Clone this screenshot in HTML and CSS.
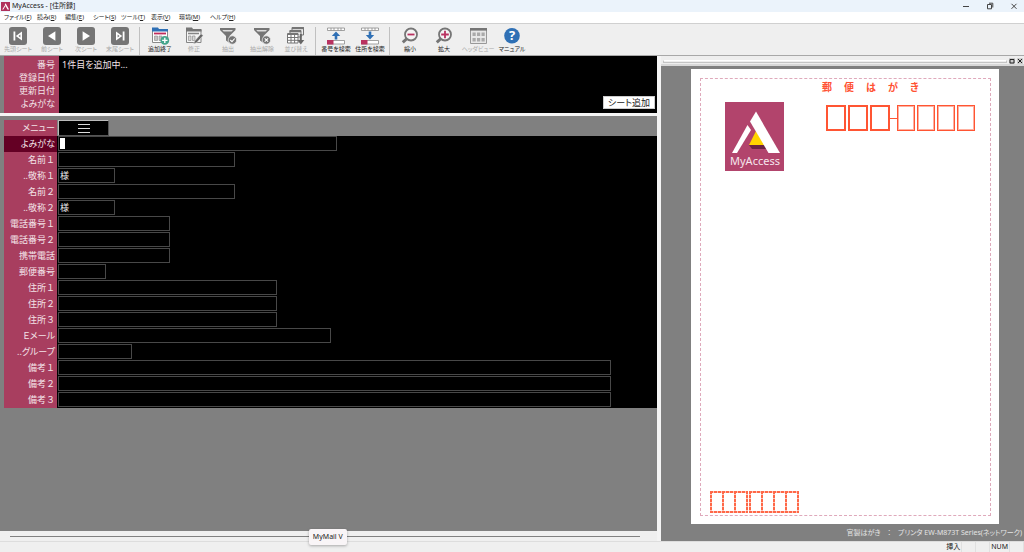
FILE: index.html
```html
<!DOCTYPE html>
<html lang="ja">
<head>
  <meta charset="UTF-8">
  <title>MyAccess - [住所録]</title>
  <link rel="stylesheet" href="styles.css">
</head>
<body>
  <header class="titlebar">
    <svg class="app-icon" viewBox="0 0 10 10"><rect width="10" height="10" fill="#b0305c"/><path d="M1.3 8.2L4.4 3.6L5 4.4L2.6 8.2ZM4.2 2.8L5.1 1.3L9 8.2H7.2Z" fill="#fff"/></svg>
    <h1 class="title">MyAccess - [住所録]</h1>
    <div class="window-buttons">
      <button aria-label="最小化"><svg viewBox="0 0 8 8"><path d="M1 4.5H7" stroke="#444" fill="none"/></svg></button>
      <button aria-label="元に戻す"><svg viewBox="0 0 8 8"><path d="M1.5 2.5H5.5V6.8H1.5ZM3 1.2H6.8V5.5" stroke="#444" fill="none"/></svg></button>
      <button aria-label="閉じる"><svg viewBox="0 0 8 8"><path d="M1.5 1.8L6.5 6.8M6.5 1.8L1.5 6.8" stroke="#444" fill="none"/></svg></button>
    </div>
  </header>

  <nav class="menubar">
    <button>ファイル(<u>F</u>)</button>
    <button>読み(<u>R</u>)</button>
    <button>編集(<u>E</u>)</button>
    <button>シート(<u>S</u>)</button>
    <button>ツール(<u>T</u>)</button>
    <button>表示(<u>V</u>)</button>
    <button>環境(<u>M</u>)</button>
    <button>ヘルプ(<u>H</u>)</button>
  </nav>

  <div class="toolbar">
    <button class="tool" disabled>
      <svg viewBox="0 0 20 18"><rect x="1" width="18" height="18" rx="3" fill="#757575"/><path d="M5.5 4.5H7.3V13.5H5.5ZM14 4.5V13.5L7.8 9Z" fill="#fff"/><path d="M12.4 7.5V10.5L10.5 9Z" fill="#757575"/></svg>
      <span>先頭シート</span>
    </button>
    <button class="tool" disabled>
      <svg viewBox="0 0 20 18"><rect x="1" width="18" height="18" rx="3" fill="#757575"/><path d="M13.4 4.3V13.7L6 9Z" fill="#fff"/></svg>
      <span>前シート</span>
    </button>
    <button class="tool" disabled>
      <svg viewBox="0 0 20 18"><rect x="1" width="18" height="18" rx="3" fill="#757575"/><path d="M6.6 4.3V13.7L14 9Z" fill="#fff"/></svg>
      <span>次シート</span>
    </button>
    <button class="tool" disabled>
      <svg viewBox="0 0 20 18"><rect x="1" width="18" height="18" rx="3" fill="#757575"/><path d="M12.7 4.5H14.5V13.5H12.7ZM6 4.5V13.5L12.2 9Z" fill="#fff"/><path d="M7.6 7.5V10.5L9.5 9Z" fill="#757575"/></svg>
      <span>末尾シート</span>
    </button>
    <i class="separator"></i>
    <button class="tool">
      <svg viewBox="0 0 20 18"><path d="M2.5 3V15.5H17.5V3Z" fill="#fff" stroke="#8a8a8a"/><path d="M2 .5H8L9 2H18V4.5H2Z" fill="#2f70b5"/><path d="M4 6.5H16" stroke="#c02d5c" stroke-width="1.8"/><path d="M4.5 9H7.5V13.5H4.5ZM9 9H12V13.5H9Z" fill="#c4c4c4" stroke="#8a8a8a" stroke-width=".6"/><circle cx="14.8" cy="13.4" r="4.4" fill="#45a58c"/><path d="M14.8 10.7V16.1M12.1 13.4H17.5" stroke="#fff" stroke-width="1.4"/></svg>
      <span>追加終了</span>
    </button>
    <button class="tool" disabled>
      <svg viewBox="0 0 20 18"><path d="M2.5 3V15.5H17V3Z" fill="#f4f4f4" stroke="#858585"/><path d="M2 .5H8L9 2H17.5V4.5H2Z" fill="#757575"/><path d="M4 6.5H15" stroke="#858585" stroke-width="1.5"/><path d="M4.5 9H7V13.5H4.5ZM8.5 9H11V13.5H8.5Z" fill="#d8d8d8" stroke="#858585" stroke-width=".6"/><path d="M9.5 17L10.6 14L17 6.8L19.2 8.5L12.6 15.8Z" fill="#666" stroke="#efefef" stroke-width=".5"/></svg>
      <span>修正</span>
    </button>
    <button class="tool" disabled>
      <svg viewBox="0 0 20 18"><path d="M2 1H17.5V3L11.5 9V16L8 13.5V9L2 3Z" fill="#757575"/><path d="M4.2 3H15L13.6 4.5H5.7Z" fill="#ddd"/><circle cx="14.4" cy="13" r="4.2" fill="#757575" stroke="#efefef" stroke-width=".7"/><path d="M12.3 13L14 14.7L16.7 11.5" fill="none" stroke="#fff" stroke-width="1.1"/></svg>
      <span>抽出</span>
    </button>
    <button class="tool" disabled>
      <svg viewBox="0 0 20 18"><path d="M2 1H17.5V3L11.5 9V16L8 13.5V9L2 3Z" fill="#757575"/><path d="M4.2 3H15L13.6 4.5H5.7Z" fill="#ddd"/><circle cx="14.4" cy="13" r="4.2" fill="#757575" stroke="#efefef" stroke-width=".7"/><path d="M12.7 11.3L16.1 14.7M16.1 11.3L12.7 14.7" fill="none" stroke="#fff" stroke-width="1.1"/></svg>
      <span>抽出解除</span>
    </button>
    <button class="tool" disabled>
      <svg viewBox="0 0 20 18"><path d="M6 .5H17.5V8H6Z" fill="#eee" stroke="#757575"/><path d="M6 1.2H18" stroke="#757575" stroke-width="2"/><path d="M4 3.5H15V10H4Z" fill="#eee" stroke="#757575"/><path d="M3.5 4.3H15" stroke="#757575" stroke-width="2"/><path d="M1.5 6.5H12V16H1.5Z" fill="#fff" stroke="#757575"/><path d="M1 7.5H12.5M1.5 10.5H12M1.5 13.3H12M5 8V16M8.6 8V16" stroke="#757575"/><path d="M14.8 7V15" stroke="#666" stroke-width="2"/><path d="M11.3 13H18.3L14.8 17.5Z" fill="#666"/></svg>
      <span>並び替え</span>
    </button>
    <i class="separator"></i>
    <button class="tool">
      <svg viewBox="0 0 20 18"><path d="M1.5 1H18.5V3.5H1.5ZM5 1V3.5M8 1V3.5M12 1V3.5M15 1V3.5" fill="#fff" stroke="#8b8b8b" stroke-width=".8"/><path d="M1.5 13.5H18.5V17H1.5Z" fill="#fff" stroke="#8b8b8b" stroke-width=".8"/><path d="M1 13H7.5V17.5H1Z" fill="#b93260"/><path d="M10 4.5L14.2 9H11.3V12.5H8.7V9H5.8Z" fill="#2f70b5"/></svg>
      <span>番号を検索</span>
    </button>
    <button class="tool">
      <svg viewBox="0 0 20 18"><path d="M1.5 1H18.5V3.5H1.5ZM5 1V3.5M8 1V3.5M12 1V3.5M15 1V3.5" fill="#fff" stroke="#8b8b8b" stroke-width=".8"/><path d="M1.5 13.5H18.5V17H1.5Z" fill="#fff" stroke="#8b8b8b" stroke-width=".8"/><path d="M1 13H7.5V17.5H1Z" fill="#b93260"/><path d="M10 12.5L14.2 8H11.3V4.5H8.7V8H5.8Z" fill="#2f70b5"/></svg>
      <span>住所を検索</span>
    </button>
    <i class="separator"></i>
    <button class="tool">
      <svg viewBox="0 0 20 18"><path d="M7 11.5L2.8 15.3" stroke="#757575" stroke-width="3"/><circle cx="11" cy="7.5" r="6" fill="#f4f4f4" stroke="#757575" stroke-width="1.8"/><path d="M7.5 7.5H14.5" stroke="#b93260" stroke-width="1.8"/></svg>
      <span>縮小</span>
    </button>
    <button class="tool">
      <svg viewBox="0 0 20 18"><path d="M7 11.5L2.8 15.3" stroke="#757575" stroke-width="3"/><circle cx="11" cy="7.5" r="6" fill="#f4f4f4" stroke="#757575" stroke-width="1.8"/><path d="M7.2 7.5H14.8M11 3.7V11.3" stroke="#b93260" stroke-width="1.8"/></svg>
      <span>拡大</span>
    </button>
    <button class="tool" disabled>
      <svg viewBox="0 0 20 18"><path d="M2.5 1.5H18.5V16.5H2.5Z" fill="#e8e8e8" stroke="#999"/><path d="M2 2.3H19" stroke="#757575" stroke-width="2.6"/><path d="M4.5 5.5H7.7V9H4.5ZM9 5.5H12.2V9H9ZM13.5 5.5H16.7V9H13.5ZM4.5 11H7.7V14.5H4.5ZM9 11H12.2V14.5H9ZM13.5 11H16.7V14.5H13.5Z" fill="#aaa"/></svg>
      <span>ヘッダビュー</span>
    </button>
    <button class="tool">
      <svg viewBox="0 0 20 18"><circle cx="10" cy="8.7" r="7.8" fill="#2f70b5"/><text x="10" y="13.2" text-anchor="middle" class="help-mark">?</text></svg>
      <span>マニュアル</span>
    </button>
  </div>

  <main class="workspace">
    <div class="left-pane">
      <section class="summary">
        <dl class="summary-list">
          <dt>番号</dt><dd>1件目を追加中...</dd>
          <dt>登録日付</dt><dd></dd>
          <dt>更新日付</dt><dd></dd>
          <dt>よみがな</dt><dd></dd>
        </dl>
        <button class="add-sheet">シート追加</button>
      </section>

      <section class="sheet">
        <div class="row menu-row">
          <label for="menu">メニュー</label>
          <button id="menu" class="menu-button" aria-label="メニュー"><svg viewBox="0 0 12 10"><path d="M0 1.5H12M0 5.5H12M0 9.5H12" stroke="#ddd"/></svg></button>
        </div>
        <div class="row active">
          <label for="yomi">よみがな</label>
          <div class="field kana"><span class="cursor"></span><input id="yomi" type="text"></div>
        </div>
        <div class="row numbered"><label for="name1">名前１</label><div class="field name"><input id="name1" type="text"></div></div>
        <div class="row numbered"><label for="title1">..敬称１</label><div class="field honorific"><input id="title1" type="text" value="様"></div></div>
        <div class="row numbered"><label for="name2">名前２</label><div class="field name"><input id="name2" type="text"></div></div>
        <div class="row numbered"><label for="title2">..敬称２</label><div class="field honorific"><input id="title2" type="text" value="様"></div></div>
        <div class="row numbered"><label for="tel1">電話番号１</label><div class="field tel"><input id="tel1" type="text"></div></div>
        <div class="row numbered"><label for="tel2">電話番号２</label><div class="field tel"><input id="tel2" type="text"></div></div>
        <div class="row"><label for="mobile">携帯電話</label><div class="field tel"><input id="mobile" type="text"></div></div>
        <div class="row"><label for="zip">郵便番号</label><div class="field zip"><input id="zip" type="text"></div></div>
        <div class="row numbered"><label for="addr1">住所１</label><div class="field address"><input id="addr1" type="text"></div></div>
        <div class="row numbered"><label for="addr2">住所２</label><div class="field address"><input id="addr2" type="text"></div></div>
        <div class="row numbered"><label for="addr3">住所３</label><div class="field address"><input id="addr3" type="text"></div></div>
        <div class="row"><label for="email">Ｅメール</label><div class="field email"><input id="email" type="text"></div></div>
        <div class="row"><label for="group">..グループ</label><div class="field group"><input id="group" type="text"></div></div>
        <div class="row numbered"><label for="note1">備考１</label><div class="field note"><input id="note1" type="text"></div></div>
        <div class="row numbered"><label for="note2">備考２</label><div class="field note"><input id="note2" type="text"></div></div>
        <div class="row numbered"><label for="note3">備考３</label><div class="field note"><input id="note3" type="text"></div></div>
      </section>

      <div class="scroll-strip">
        <div class="scroll-line"></div>
        <div class="tooltip">MyMail V</div>
      </div>
    </div>

    <aside class="right-pane">
      <div class="dock-bar">
        <div class="grip"></div>
        <button aria-label="切り離す"><svg viewBox="0 0 6 6"><path d="M1 1.5H5V5H1Z" fill="none" stroke="#222"/></svg></button>
        <button aria-label="閉じる"><svg viewBox="0 0 6 6"><path d="M1 1L5 5M5 1L1 5" fill="none" stroke="#222"/></svg></button>
      </div>
      <div class="preview">
        <div class="postcard">
          <div class="print-area">
            <div class="card-top">
              <svg class="logo" viewBox="0 0 59 69">
                <rect width="59" height="69" fill="#b2446c"/>
                <path d="M24 43H40L43 47H27Z" fill="#6b2442"/>
                <path d="M31 29L40 43H24Z" fill="#ffd400"/>
                <path d="M7 51L22.500 23L26 28L12 51Z" fill="#fff"/>
                <path d="M25 19.500L31 9.500L55 51H43.500Z" fill="#fff"/>
                <text x="30" y="63" text-anchor="middle" class="logo-text">MyAccess</text>
              </svg>
              <div class="card-head">
                <div class="card-title"><span>郵</span><span>便</span><span>は</span><span>が</span><span>き</span></div>
                <div class="zip-boxes">
                  <i class="thick"></i><i class="thick"></i><i class="thick"></i>
                  <b></b>
                  <i></i><i></i><i></i><i></i>
                </div>
              </div>
            </div>
            <div class="sender-zip">
              <div class="cells"><i></i><i></i><i></i></div>
              <div class="cells"><i></i><i></i><i></i><i></i></div>
            </div>
          </div>
        </div>
        <p class="printer">官製はがき　：　プリンタ EW-M873T Series(ネットワーク)</p>
      </div>
    </aside>
  </main>

  <footer class="statusbar">
    <span class="cell">挿入</span>
    <span class="cell blank"></span>
    <span class="cell blank"></span>
    <span class="cell">NUM</span>
    <span class="cell blank"></span>
  </footer>
</body>
</html>
```
FILE: styles.css
```css
* {
  box-sizing: border-box;
}

body {
  display: flex;
  flex-direction: column;
  height: 100vh;
  margin: 0;
  overflow: hidden;
  background: #efefef;
  color: #222;
  font-family: "Noto Sans", "Noto Sans CJK JP", sans-serif;
  font-size: 9px;
  font-feature-settings: "palt";
}

button,
input {
  margin: 0;
  padding: 0;
  border: 0;
  background: none;
  color: inherit;
  font: inherit;
  font-feature-settings: inherit;
}

svg {
  display: block;
}

/* title bar and menus */
.titlebar {
  display: flex;
  align-items: center;
  flex: none;
  height: 12px;
  padding-left: 1px;
  background: #ebf3fb;
}

.app-icon {
  width: 9px;
  height: 9px;
}

.title {
  margin: 0 0 0 2px;
  font-size: 7px;
  font-weight: normal;
  line-height: 12px;
}

.window-buttons {
  display: flex;
  gap: 16px;
  margin-left: auto;
  padding-right: 6px;
}

.window-buttons svg {
  width: 8px;
  height: 8px;
}

.menubar {
  display: grid;
  grid-template-columns: 33px 28px 28px 28px 30px 28px 31px 30px;
  flex: none;
  height: 12px;
  padding-left: 4px;
  border-bottom: 1px solid #d0d0d0;
  background: #fff;
  font-size: 6px;
  line-height: 11px;
}

.menubar button {
  text-align: left;
  white-space: nowrap;
}

/* toolbar */
.toolbar {
  display: flex;
  flex: none;
  height: 32px;
  padding: 3px 1px 0;
  border-bottom: 1px solid #a8a8a8;
}

.tool {
  display: flex;
  flex-direction: column;
  align-items: center;
  width: 34px;
  font-size: 6px;
  line-height: 9px;
  white-space: nowrap;
}

.tool:disabled {
  color: #aaa;
}

.tool svg {
  width: 20px;
  height: 18px;
}

.help-mark {
  fill: #fff;
  font-family: "Open Sans", sans-serif;
  font-size: 13px;
  font-weight: bold;
}

.separator {
  width: 1px;
  height: 28px;
  margin: 0 3px 0 2px;
  background: #c0c0c0;
}

/* panes */
.workspace {
  display: grid;
  grid-template-columns: 657fr 363fr;
  gap: 4px;
  flex: 1;
  min-height: 0;
  border-bottom: 1px solid #ddd;
  background: #f4f4f4;
}

.left-pane,
.right-pane {
  display: flex;
  flex-direction: column;
  min-width: 0;
}

.summary {
  display: flex;
  align-items: flex-end;
  flex: none;
  height: 57px;
  padding-right: 2px;
  border-left: 4px solid #808080;
  background: #000;
}

.summary-list {
  display: grid;
  grid-template-columns: 55px 1fr;
  grid-auto-rows: 13px;
  flex: 1;
  align-self: stretch;
  margin: 0;
  padding-top: 2px;
  background: linear-gradient(to right, #a83e5f 55px, #000 55px);
  color: #f3e3e8;
  line-height: 13px;
}

.summary-list dt {
  padding-right: 4px;
  text-align: right;
}

.summary-list dd {
  margin: 0;
  padding-left: 3px;
}

.add-sheet {
  width: 52px;
  height: 13px;
  margin-bottom: 4px;
  border: 1px solid #ccc;
  background: #fff;
  line-height: 11px;
}

.sheet {
  flex: 1;
  min-height: 0;
  margin-top: 3px;
  padding: 4px 0 0 4px;
  background: #808080;
}

.row {
  display: flex;
  height: 16px;
  background: #000;
}

.menu-row {
  background: none;
}

.row label {
  width: 53px;
  padding-right: 2px;
  background: #a83e5f;
  color: #f3e3e8;
  line-height: 16px;
  text-align: right;
  white-space: nowrap;
}

/* full-width digits keep their full cell */
.numbered label {
  font-feature-settings: normal;
}

.row.active label {
  background: #640024;
}

.menu-button {
  display: flex;
  align-items: center;
  justify-content: center;
  width: 51px;
  margin-left: 1px;
  border: 1px solid #555;
  border-top-color: #bbb;
  border-left-color: #bbb;
  background: #000;
}

.menu-button svg {
  width: 12px;
  height: 10px;
}

.field {
  display: flex;
  align-items: center;
  height: 15px;
  margin-left: 1px;
  padding: 0 1px;
  border: 1px solid #484848;
}

.field input {
  flex: 1;
  width: 0;
  height: 13px;
  outline: none;
  color: #eee;
}

.cursor {
  width: 5px;
  height: 11px;
  background: #fff;
}

.kana { width: 279px; }
.name { width: 177px; }
.honorific { width: 57px; }
.tel { width: 112px; }
.zip { width: 48px; }
.address { width: 219px; }
.email { width: 273px; }
.group { width: 74px; }
.note { width: 553px; }

.scroll-strip {
  position: relative;
  flex: none;
  height: 10px;
  padding: 5px 17px 0 10px;
  background: #efefef;
}

.scroll-line {
  height: 1px;
  background: #808080;
}

.tooltip {
  position: absolute;
  left: 47%;
  bottom: -4px;
  width: 38px;
  border-radius: 2px;
  background: #f9f5f7;
  box-shadow: 0 1px 3px rgba(0, 0, 0, 0.3);
  font-size: 7px;
  line-height: 16px;
  text-align: center;
}

/* postcard preview */
.dock-bar {
  display: flex;
  align-items: center;
  gap: 2px;
  flex: none;
  height: 10px;
  padding: 2px 1px 0 2px;
  border-bottom: 2px solid #d8d8d8;
  background: #eee;
}

.dock-bar button {
  background: #ccc;
}

.dock-bar svg {
  width: 6px;
  height: 6px;
}

.grip {
  flex: 1;
  height: 3px;
  border: 1px solid #c4c4c4;
  border-top-color: #fff;
}

.preview {
  display: flex;
  flex-direction: column;
  flex: 1;
  min-height: 0;
  background: #808080;
}

.postcard {
  display: flex;
  flex: 1;
  margin: 3px 25px 0 30px;
  padding: 9px 8px 8px 9px;
  background: #fff;
}

.print-area {
  display: flex;
  flex-direction: column;
  justify-content: space-between;
  flex: 1;
  border: 1px dashed #dfa9bb;
}

.card-top {
  display: flex;
  justify-content: space-between;
  padding: 0 15px 0 24px;
}

.logo {
  width: 59px;
  height: 69px;
  margin-top: 23px;
}

.logo-text {
  fill: #f6e6ec;
  font-family: "Noto Sans", sans-serif;
  font-size: 11px;
}

.card-title {
  display: flex;
  gap: 12px;
  margin-left: -4px;
  color: #ff5233;
  font-size: 10px;
  font-weight: bold;
  line-height: 16px;
}

.card-title span {
  width: 10px;
}

.zip-boxes {
  display: flex;
  align-items: center;
  margin-top: 10px;
}

.zip-boxes i {
  width: 18px;
  height: 26px;
  margin-right: 2px;
  border: 1px solid #ff5533;
  outline: 1px solid #ffb0a0;
  outline-offset: -2px;
}

.zip-boxes .thick {
  width: 20px;
  border-width: 2px;
  outline: none;
}

.zip-boxes i:last-child {
  margin-right: 0;
}

.zip-boxes b {
  width: 7px;
  height: 1px;
  margin-left: -2px;
  background: #ff5533;
}

.sender-zip {
  display: flex;
  gap: 1px;
  padding: 0 0 2px 9px;
}

/* dashes drawn as gradients so that the short sides stay even */
.cells {
  display: flex;
  height: 22px;
  background:
    repeating-linear-gradient(to right, #ff6848 0 3px, #ffc4b8 3px 4px) top / 100% 2px no-repeat,
    repeating-linear-gradient(to right, #ff6848 0 3px, #ffc4b8 3px 4px) bottom / 100% 2px no-repeat,
    repeating-linear-gradient(to bottom, #ff6848 0 3px, #ffc4b8 3px 4px) left / 2px 100% no-repeat;
}

.cells i {
  width: 12px;
  background: repeating-linear-gradient(to bottom, #ff6848 0 3px, #ffc4b8 3px 4px) right / 2px 100% no-repeat;
}

.cells i:first-child {
  width: 14px;
}

.printer {
  margin: 0;
  padding-right: 2px;
  color: #e4e4e4;
  font-size: 7px;
  line-height: 17px;
  text-align: right;
}

/* status bar */
.statusbar {
  display: flex;
  justify-content: flex-end;
  flex: none;
  height: 10px;
  font-size: 7px;
  line-height: 10px;
}

.cell {
  padding: 0 1px;
  border-right: 1px solid #e0e0e0;
}

.blank {
  width: 14px;
}
```
